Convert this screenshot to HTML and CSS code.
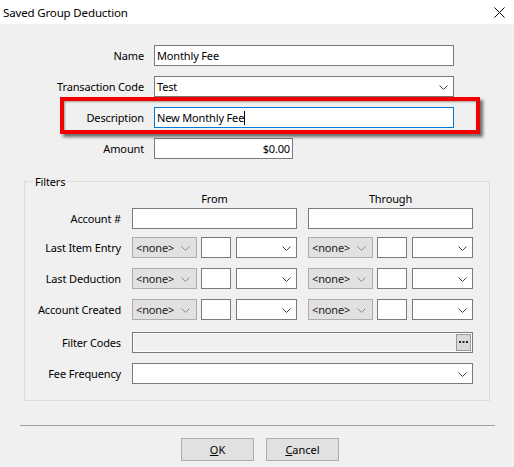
FILE: index.html
```html
<!DOCTYPE html>
<html lang="en">
<head>
    <meta charset="UTF-8">
    <title>Saved Group Deduction</title>
    <link rel="stylesheet" href="styles.css">
</head>
<body>

    <div class="dialog">
        <div class="titlebar">
            <span class="title">Saved Group Deduction</span>
            <svg class="close" width="11" height="11" viewBox="0 0 11 11">
                <path d="M0.5 0.5 L10.5 10.5 M10.5 0.5 L0.5 10.5" stroke="#000" stroke-width="1" fill="none"/>
            </svg>
        </div>

        <div class="content">
            <div class="main-form">
                <label class="lbl">Name</label>
                <div class="field wide">Monthly Fee</div>

                <label class="lbl">Transaction Code</label>
                <div class="field wide combo">Test<svg class="chev" width="9" height="5" viewBox="0 0 9 5"><path d="M0.5 0.5 L4.5 4.5 L8.5 0.5" stroke="#444" fill="none"/></svg></div>

                <label class="lbl">Description</label>
                <div class="field wide focused">New Monthly Fee<span class="caret"></span></div>

                <label class="lbl">Amount</label>
                <div class="field amount">$0.00</div>

                <!-- highlight drawn over the description row -->
                <div class="highlight"></div>
            </div>

            <fieldset class="filters">
                <legend>Filters</legend>
                <div class="filter-grid">
                    <span class="col-head"></span>
                    <span class="col-head">From</span>
                    <span class="col-head">Through</span>

                    <label class="lbl tight">Account #</label>
                    <div class="field tight"></div>
                    <div class="field tight"></div>

                    <label class="lbl">Last Item Entry</label>
                    <div class="date-set">
                        <div class="field none">&lt;none&gt;<svg class="chev light" width="9" height="5" viewBox="0 0 9 5"><path d="M0.5 0.5 L4.5 4.5 L8.5 0.5" fill="none"/></svg></div>
                        <div class="field num"></div>
                        <div class="field combo unit"><svg class="chev" width="9" height="5" viewBox="0 0 9 5"><path d="M0.5 0.5 L4.5 4.5 L8.5 0.5" stroke="#444" fill="none"/></svg></div>
                    </div>
                    <div class="date-set">
                        <div class="field none">&lt;none&gt;<svg class="chev light" width="9" height="5" viewBox="0 0 9 5"><path d="M0.5 0.5 L4.5 4.5 L8.5 0.5" fill="none"/></svg></div>
                        <div class="field num"></div>
                        <div class="field combo unit"><svg class="chev" width="9" height="5" viewBox="0 0 9 5"><path d="M0.5 0.5 L4.5 4.5 L8.5 0.5" stroke="#444" fill="none"/></svg></div>
                    </div>

                    <label class="lbl">Last Deduction</label>
                    <div class="date-set">
                        <div class="field none">&lt;none&gt;<svg class="chev light" width="9" height="5" viewBox="0 0 9 5"><path d="M0.5 0.5 L4.5 4.5 L8.5 0.5" fill="none"/></svg></div>
                        <div class="field num"></div>
                        <div class="field combo unit"><svg class="chev" width="9" height="5" viewBox="0 0 9 5"><path d="M0.5 0.5 L4.5 4.5 L8.5 0.5" stroke="#444" fill="none"/></svg></div>
                    </div>
                    <div class="date-set">
                        <div class="field none">&lt;none&gt;<svg class="chev light" width="9" height="5" viewBox="0 0 9 5"><path d="M0.5 0.5 L4.5 4.5 L8.5 0.5" fill="none"/></svg></div>
                        <div class="field num"></div>
                        <div class="field combo unit"><svg class="chev" width="9" height="5" viewBox="0 0 9 5"><path d="M0.5 0.5 L4.5 4.5 L8.5 0.5" stroke="#444" fill="none"/></svg></div>
                    </div>

                    <label class="lbl">Account Created</label>
                    <div class="date-set">
                        <div class="field none">&lt;none&gt;<svg class="chev light" width="9" height="5" viewBox="0 0 9 5"><path d="M0.5 0.5 L4.5 4.5 L8.5 0.5" fill="none"/></svg></div>
                        <div class="field num"></div>
                        <div class="field combo unit"><svg class="chev" width="9" height="5" viewBox="0 0 9 5"><path d="M0.5 0.5 L4.5 4.5 L8.5 0.5" stroke="#444" fill="none"/></svg></div>
                    </div>
                    <div class="date-set">
                        <div class="field none">&lt;none&gt;<svg class="chev light" width="9" height="5" viewBox="0 0 9 5"><path d="M0.5 0.5 L4.5 4.5 L8.5 0.5" fill="none"/></svg></div>
                        <div class="field num"></div>
                        <div class="field combo unit"><svg class="chev" width="9" height="5" viewBox="0 0 9 5"><path d="M0.5 0.5 L4.5 4.5 L8.5 0.5" stroke="#444" fill="none"/></svg></div>
                    </div>

                    <label class="lbl gap-top">Filter Codes</label>
                    <div class="field span disabled gap-top">
                        <span class="ellipsis">
                            <svg width="9" height="3" viewBox="0 0 9 3"><rect x="0" y="0" width="2" height="2" fill="#222"/><rect x="3.5" y="0" width="2" height="2" fill="#222"/><rect x="7" y="0" width="2" height="2" fill="#222"/></svg>
                        </span>
                    </div>

                    <label class="lbl">Fee Frequency</label>
                    <div class="field span combo"><svg class="chev" width="9" height="5" viewBox="0 0 9 5"><path d="M0.5 0.5 L4.5 4.5 L8.5 0.5" stroke="#444" fill="none"/></svg></div>
                </div>
            </fieldset>

            <hr class="divider">

            <div class="buttons">
                <button class="btn"><u>O</u>K</button>
                <button class="btn"><u>C</u>ancel</button>
            </div>
        </div>
    </div>

</body>
</html>
```

FILE: styles.css
```css
body {
    margin: 0;
    font-family: "Noto Sans", "Open Sans", sans-serif;
    font-size: 11px;
    letter-spacing: -0.15px;
    color: #000;
}

.dialog {
    width: 514px;
    height: 467px;
    background-color: #f0f0f0;
    overflow: hidden;
}

.titlebar {
    height: 24px;
    background-color: #fff;
    display: flex;
    align-items: center;
    justify-content: space-between;
    padding: 0 9px 0 3px;
}

.title {
    font-size: 11.5px;
}

.content {
    padding-top: 21px;
}

/* top block: name / code / description / amount */
.main-form {
    position: relative;
    display: grid;
    grid-template-columns: 144px 300px;
    column-gap: 10px;
    row-gap: 10px;
}

.lbl {
    text-align: right;
    align-self: center;
    white-space: nowrap;
}

.field {
    box-sizing: border-box;
    height: 21px;
    border: 1px solid #7a7a7a;
    background-color: #fff;
    padding: 0 2px;
    display: flex;
    align-items: center;
    position: relative;
}

.combo .chev {
    position: absolute;
    right: 5px;
    top: 8px;
}

.focused {
    border-color: #0078d7;
}

.caret {
    display: inline-block;
    width: 1px;
    height: 14px;
    background-color: #000;
}

.amount {
    width: 139px;
    justify-content: flex-end;
}

.highlight {
    position: absolute;
    left: 60px;
    top: 52px;
    width: 420px;
    height: 37px;
    box-sizing: border-box;
    border: 4px solid #f20000;
    box-shadow: 3px 3px 3px rgba(0, 0, 0, 0.55), inset 1px 1px 2px rgba(0, 0, 0, 0.35);
}

/* filters group */
.filters {
    margin: 15px 24px 0 24px;
    padding: 0 16px 16px 0;
    border: 1px solid #dcdcdc;
    width: 466px;
    box-sizing: border-box;
}

.filters legend {
    margin-left: 8px;
    padding: 0 2px;
}

.filter-grid {
    display: grid;
    grid-template-columns: 96px 165px 165px;
    column-gap: 11px;
    row-gap: 10px;
}

.col-head {
    text-align: center;
    line-height: 14px;
    margin-top: 3px;
    margin-bottom: -8px;
}

.tight {
    margin-bottom: -2px;
}

.date-set {
    display: flex;
}

.none {
    width: 65px;
    background-color: #e1e1e1;
    border-color: #adadad;
    color: #222;
    margin-right: 4px;
    padding-left: 3px;
}

.chev.light {
    position: absolute;
    right: 6px;
    top: 8px;
    stroke: #8a8a8a;
}

.num {
    width: 30px;
    margin-right: 5px;
}

.unit {
    width: 61px;
}

.span {
    grid-column: 2 / 4;
}

.gap-top {
    margin-top: 2px;
}

.disabled {
    background-color: #f0f0f0;
    box-shadow: inset 0 0 0 1px #fff;
    justify-content: flex-end;
    padding: 0 1px;
}

.ellipsis {
    box-sizing: border-box;
    width: 15px;
    height: 17px;
    background-color: #dadada;
    border: 1px solid #9a9a9a;
    display: flex;
    align-items: center;
    justify-content: center;
}

.divider {
    margin: 24px 19px 0 20px;
    border: none;
    border-top: 1px solid #a0a0a0;
    height: 0;
}

.buttons {
    display: flex;
    justify-content: center;
    gap: 12px;
    margin-top: 12px;
    padding-left: 6px;
}

.btn {
    width: 73px;
    height: 23px;
    background-color: #e1e1e1;
    border: 1px solid #adadad;
    font-family: "Noto Sans", "Open Sans", sans-serif;
    font-size: 11px;
    color: #000;
    padding: 0;
}
```
